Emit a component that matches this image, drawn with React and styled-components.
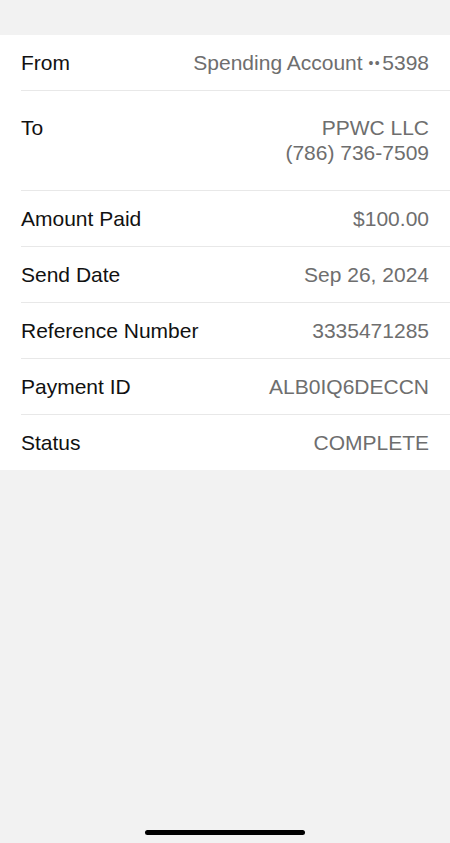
import styled, { createGlobalStyle } from "styled-components";

const GlobalStyle = createGlobalStyle`
  body {
    margin: 0;
    background-color: #f2f2f2;
    font-family: "Liberation Sans", Arial, sans-serif;
  }
`;

const Screen = styled.div`
  min-height: 843px;
  display: flex;
  flex-direction: column;
  background-color: #f2f2f2;
`;

const Panel = styled.section`
  margin-top: 35px;
  background-color: #ffffff;
  padding-left: 21px;
`;

const Row = styled.div`
  display: flex;
  justify-content: space-between;
  align-items: flex-start;
  padding: ${(props) => (props.$tall ? "24px 21px 25px 0" : "14.5px 21px 14.5px 0")};
  border-bottom: ${(props) => (props.$last ? "none" : "1px solid #e8e8e8")};
  font-size: 21px;
  line-height: 26px;
`;

const Label = styled.span`
  color: #111111;
`;

const Value = styled.div`
  color: #6e6e6e;
  text-align: right;
  line-height: ${(props) => (props.$multi ? "25px" : "26px")};
`;

const Dots = styled.span`
  font-size: 14px;
  letter-spacing: 1.5px;
  vertical-align: 2px;
  margin-right: 1px;
`;

const HomeBar = styled.div`
  margin: auto auto 8px;
  width: 160px;
  height: 5px;
  border-radius: 3px;
  background-color: #000000;
`;

const details = [
  { label: "Amount Paid", value: "$100.00" },
  { label: "Send Date", value: "Sep 26, 2024" },
  { label: "Reference Number", value: "3335471285" },
  { label: "Payment ID", value: "ALB0IQ6DECCN" },
  { label: "Status", value: "COMPLETE" },
];

function App() {
  return (
    <Screen>
      <GlobalStyle />
      <Panel>
        <Row>
          <Label>From</Label>
          <Value>
            Spending Account <Dots>••</Dots>5398
          </Value>
        </Row>
        <Row $tall>
          <Label>To</Label>
          <Value $multi>
            PPWC LLC
            <br />
            (786) 736-7509
          </Value>
        </Row>
        {details.map((item, i) => (
          <Row key={item.label} $last={i === details.length - 1}>
            <Label>{item.label}</Label>
            <Value>{item.value}</Value>
          </Row>
        ))}
      </Panel>
      <HomeBar />
    </Screen>
  );
}

export default App;
